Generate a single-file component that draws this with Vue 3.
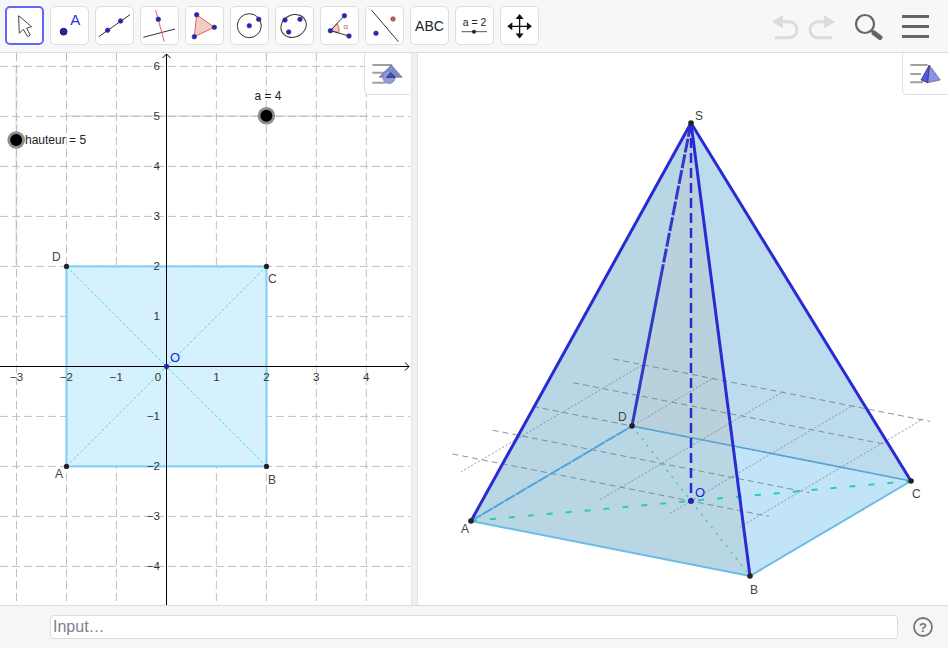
<template>
  <div class="app">
    <header class="toolbar">
      <div class="tools">
        <button class="tool selected">
          <svg viewBox="0 0 39 39"><path d="M13.6 9.7 14.3 27.3 18.3 23.3 22.6 30.7 25.3 29 21.6 22.3 26.6 20.7Z" fill="#fff" stroke="#444" stroke-width="1"/></svg>
        </button>
        <button class="tool">
          <svg viewBox="0 0 39 39">
            <circle cx="13.6" cy="25.7" r="3.4" fill="#2222cc" stroke="#222" stroke-width="1"/>
            <text x="25.3" y="19" class="icon-a">A</text>
          </svg>
        </button>
        <button class="tool">
          <svg viewBox="0 0 39 39">
            <line x1="3.7" y1="30.7" x2="35" y2="8.7" class="ln"/>
            <circle cx="12.6" cy="24.3" r="2.3" class="pt"/>
            <circle cx="25.6" cy="15" r="2.3" class="pt"/>
          </svg>
        </button>
        <button class="tool">
          <svg viewBox="0 0 39 39">
            <line x1="3.3" y1="31.3" x2="35" y2="23" class="ln"/>
            <line x1="15.6" y1="4" x2="24.3" y2="35.7" class="ln-red"/>
            <circle cx="18.3" cy="13.3" r="2.3" class="pt"/>
          </svg>
        </button>
        <button class="tool">
          <svg viewBox="0 0 39 39">
            <path d="M11.7 8.7 29.3 21.3 9.3 30.7Z" fill="#f2cbc5" stroke="#e0675c" stroke-width="1"/>
            <circle cx="11.7" cy="8.7" r="2.3" class="pt"/>
            <circle cx="29.3" cy="21.3" r="2.3" class="pt"/>
            <circle cx="9.3" cy="30.7" r="2.3" class="pt"/>
          </svg>
        </button>
        <button class="tool">
          <svg viewBox="0 0 39 39">
            <circle cx="19.3" cy="19.7" r="12" fill="none" stroke="#333" stroke-width="1"/>
            <circle cx="19.3" cy="19.7" r="2.3" class="pt"/>
            <circle cx="28.7" cy="13.3" r="2.3" class="pt"/>
          </svg>
        </button>
        <button class="tool">
          <svg viewBox="0 0 39 39">
            <ellipse cx="18.6" cy="20" rx="13" ry="11" transform="rotate(-25 18.6 20)" fill="none" stroke="#333" stroke-width="1"/>
            <circle cx="10" cy="14" r="2.3" class="pt"/>
            <circle cx="25" cy="13.3" r="2.3" class="pt"/>
            <circle cx="13.7" cy="26" r="2.3" class="pt"/>
          </svg>
        </button>
        <button class="tool">
          <svg viewBox="0 0 39 39">
            <path d="M10.4 24.7 17 17.5Q20 22 19 26.5Z" fill="#f2cbc5" stroke="#e0675c" stroke-width="1"/>
            <path d="M24.4 9.7 10.4 24.7 29 30" fill="none" stroke="#333" stroke-width="1"/>
            <circle cx="24.4" cy="9.7" r="2.3" class="pt"/>
            <circle cx="10.4" cy="24.7" r="2.3" class="pt"/>
            <circle cx="29" cy="30" r="2.3" class="pt"/>
            <text x="25.7" y="23" class="icon-alpha">α</text>
          </svg>
        </button>
        <button class="tool">
          <svg viewBox="0 0 39 39">
            <line x1="6.4" y1="4" x2="33.4" y2="35.7" class="ln"/>
            <circle cx="28" cy="13" r="2.3" fill="#e0524a" stroke="#555" stroke-width="0.6"/>
            <circle cx="11" cy="27.3" r="2.3" class="pt"/>
          </svg>
        </button>
        <button class="tool">
          <svg viewBox="0 0 39 39"><text x="19.5" y="25" class="icon-abc">ABC</text></svg>
        </button>
        <button class="tool">
          <svg viewBox="0 0 39 39">
            <text x="19.5" y="19.5" class="icon-eq">a = 2</text>
            <line x1="6.6" y1="25.7" x2="32" y2="25.7" stroke="#555" stroke-width="1"/>
            <circle cx="19" cy="25.7" r="2" fill="#223"/>
          </svg>
        </button>
        <button class="tool">
          <svg viewBox="0 0 39 39">
            <path d="M19.6 9v22.6M8.3 20.3h22.6" stroke="#111" stroke-width="1.3" fill="none"/>
            <path d="M19.6 8 15.6 13H23.6ZM19.6 32.6 15.6 27.6H23.6ZM7.3 20.3 12.3 16.3V24.3ZM31.9 20.3 26.9 16.3V24.3Z" fill="#111"/>
          </svg>
        </button>
      </div>
      <div class="actions">
        <svg class="undo" viewBox="0 0 30 30">
          <path d="M1.7 7.7 13 1V14.4Z" fill="#dcdcdc"/>
          <path d="M12 7.7h7a8 8 0 0 1 0 16H5" fill="none" stroke="#dcdcdc" stroke-width="3"/>
        </svg>
        <svg class="redo" viewBox="0 0 30 30">
          <path d="M28.3 7.7 17 1V14.4Z" fill="#dcdcdc"/>
          <path d="M18 7.7h-7a8 8 0 0 0 0 16H25" fill="none" stroke="#dcdcdc" stroke-width="3"/>
        </svg>
        <svg class="search" viewBox="0 0 32 32">
          <circle cx="13" cy="12" r="9" fill="none" stroke="#666" stroke-width="2.2"/>
          <path d="M19.5 18.5 22 20.5" stroke="#666" stroke-width="2"/>
          <path d="M22 21 28 25.5" stroke="#666" stroke-width="5" stroke-linecap="round"/>
        </svg>
        <div class="menu">
          <span></span>
          <span></span>
          <span></span>
        </div>
      </div>
    </header>

    <main class="views">
      <section class="graphics">
        <svg class="canvas" viewBox="0 53 411 552" width="411" height="552">
          <line x1="16.4" y1="66" x2="16.4" y2="266" class="slider-track"/>
          <line x1="66" y1="116" x2="366" y2="116" class="slider-track"/>
          <line v-for="x in gridX" :key="'vx' + x" :x1="x" y1="53" :x2="x" y2="605" class="grid2d"/>
          <line v-for="y in gridY" :key="'hy' + y" x1="0" :y1="y" x2="410" :y2="y" class="grid2d"/>

          <rect x="66.5" y="266.4" width="200" height="200" class="square"/>
          <line x1="66.5" y1="466.4" x2="266.5" y2="266.4" class="diag2d"/>
          <line x1="66.5" y1="266.4" x2="266.5" y2="466.4" class="diag2d"/>

          <line x1="0" y1="366.5" x2="409" y2="366.5" class="axis"/>
          <line x1="166.5" y1="54" x2="166.5" y2="605" class="axis"/>
          <path d="M405 362.5 409 366.5 405 370.5" class="axis-head"/>
          <path d="M162.5 58 166.5 54 170.5 58" class="axis-head"/>

          <text v-for="t in xLabels" :key="'xl' + t.v" :x="t.x" y="381" class="tick tick-x">{{ t.v }}</text>
          <text v-for="t in yLabels" :key="'yl' + t.v" x="160" :y="t.y" class="tick tick-y">{{ t.v }}</text>

          <circle v-for="p in squarePts" :key="p.n" :cx="p.x" :cy="p.y" r="2.6" class="dot"/>
          <circle cx="166.5" cy="366.5" r="2.4" class="dot-blue"/>
          <text x="52" y="261" class="lbl">D</text>
          <text x="268" y="283" class="lbl">C</text>
          <text x="55" y="478" class="lbl">A</text>
          <text x="268" y="484" class="lbl">B</text>
          <text x="170" y="362" class="lbl lbl-blue">O</text>

          <circle cx="266.4" cy="115.7" r="8.8" class="knob-ring"/>
          <circle cx="266.4" cy="115.7" r="6" class="knob"/>
          <text x="254.5" y="100" class="lbl lbl-dark">a = 4</text>
          <circle cx="16.2" cy="140" r="8.8" class="knob-ring"/>
          <circle cx="16.2" cy="140" r="6" class="knob"/>
          <text x="25" y="144" class="lbl lbl-dark">hauteur = 5</text>
        </svg>
        <div class="style-tab">
          <svg viewBox="0 0 45 42" width="45" height="42">
            <path d="M8.3 12H28.3M8.3 19.7H21M8.3 29.7H21" stroke="#a0a0a0" stroke-width="2" fill="none"/>
            <path d="M27.3 12 38.3 24.3H15Z" fill="#7d88d8" stroke="#667" stroke-width="0.6"/>
            <circle cx="25" cy="24.3" r="6.3" fill="#8c9be4" stroke="#778" stroke-width="0.6"/>
            <path d="M26.7 19.5 31 24.3H22.5Z" fill="#4a4ec8" stroke="#223" stroke-width="0.8"/>
          </svg>
        </div>
      </section>

      <div class="divider"></div>

      <section class="graphics3d">
        <svg class="canvas" viewBox="418 53 530 552" width="530" height="552">
          <polygon points="691,123 471,521 750,576 911,481" fill="#bcdcee"/>
          <polygon points="691,123 471,521 750,576" fill="#b9d6e5"/>
          <polygon points="691,123 632,426 733,446" fill="#b9d0dd"/>
          <polygon points="733,446 750,576 911,481" fill="#c1e4f8"/>

          <line v-for="(l, i) in gridLong" :key="'gl' + i" :x1="l.x1" :y1="l.y1" :x2="l.x2" :y2="l.y2" class="grid-long"/>
          <line v-for="(l, i) in gridShort" :key="'gs' + i" :x1="l.x1" :y1="l.y1" :x2="l.x2" :y2="l.y2" class="grid-short"/>

          <line x1="471" y1="521" x2="750" y2="576" class="base-edge"/>
          <line x1="750" y1="576" x2="911" y2="481" class="base-edge"/>
          <line x1="632" y1="426" x2="911" y2="481" class="base-back"/>
          <line x1="471" y1="521" x2="632" y2="426" class="base-back base-dash"/>
          <line x1="471" y1="521" x2="911" y2="481" class="diag-long"/>
          <line x1="632" y1="426" x2="750" y2="576" class="diag-dot"/>

          <line x1="691" y1="123" x2="691" y2="501" class="edge height"/>
          <line x1="691" y1="123" x2="661" y2="276" class="edge edge-hidden"/>
          <line x1="661" y1="276" x2="632" y2="426" class="edge edge-back"/>
          <line x1="691" y1="123" x2="471" y2="521" class="edge"/>
          <line x1="691" y1="123" x2="750" y2="576" class="edge"/>
          <line x1="691" y1="123" x2="911" y2="481" class="edge"/>

          <circle v-for="p in pyramidPts" :key="p.n" :cx="p.x" :cy="p.y" r="2.8" class="dot"/>
          <circle cx="691" cy="501" r="2.8" class="dot-blue"/>
          <text x="695" y="120" class="lbl">S</text>
          <text x="461" y="533" class="lbl">A</text>
          <text x="750" y="594" class="lbl">B</text>
          <text x="912" y="498" class="lbl">C</text>
          <text x="618" y="421" class="lbl">D</text>
          <text x="695" y="497" class="lbl lbl-blue">O</text>
        </svg>
        <div class="style-tab tab-3d">
          <svg viewBox="0 0 46 42" width="46" height="42">
            <path d="M8.3 12H25.6M8.3 21H19M8.3 29.3H21" stroke="#a0a0a0" stroke-width="2" fill="none"/>
            <path d="M27.3 12 38.3 27 25.6 29.7Z" fill="#8791ee" stroke="#556" stroke-width="0.6"/>
            <path d="M27.3 12 19 27 25.6 29.7Z" fill="#5359e6" stroke="#334" stroke-width="0.8"/>
          </svg>
        </div>
      </section>
    </main>

    <footer class="inputbar">
      <input class="input" placeholder="Input…" />
      <svg class="help" viewBox="0 0 22 22" width="22" height="22">
        <circle cx="11" cy="11" r="9" fill="none" stroke="#777" stroke-width="1.8"/>
        <text x="11" y="15.5" class="help-mark">?</text>
      </svg>
    </footer>
  </div>
</template>

<script setup>
const UNIT_X = 49.97
const UNIT_Y = 50
const ORIGIN_X = 166.4
const ORIGIN_Y = 366.4

const xTicks = [-3, -2, -1, 1, 2, 3, 4]
const yTicks = [6, 5, 4, 3, 2, 1, -1, -2, -3, -4]

const gridX = xTicks.map(k => ORIGIN_X + k * UNIT_X)
const gridY = [...yTicks].map(k => ORIGIN_Y - k * UNIT_Y)

const minus = v => (v < 0 ? '\u2212' + -v : String(v))

const xLabels = [
  ...xTicks.map(k => ({ v: minus(k), x: ORIGIN_X + k * UNIT_X })),
  { v: '0', x: 158 }
]
const yLabels = yTicks.map(k => ({ v: minus(k), y: ORIGIN_Y - k * UNIT_Y + 4 }))

const squarePts = [
  { n: 'A', x: 66.5, y: 466.4 },
  { n: 'B', x: 266.5, y: 466.4 },
  { n: 'C', x: 266.5, y: 266.4 },
  { n: 'D', x: 66.5, y: 266.4 }
]

const pyramidPts = [
  { n: 'A', x: 471, y: 521 },
  { n: 'B', x: 750, y: 576 },
  { n: 'C', x: 911, y: 481 },
  { n: 'D', x: 632, y: 426 },
  { n: 'S', x: 691, y: 123 }
]

// base plane of the 3D view, projected from xOy
const project = (u, v) => ({
  x: 691 + u * 69.75 + v * 40.25,
  y: 501 + u * 13.75 - v * 23.75
})
const segment = (a, b) => ({ x1: a.x, y1: a.y, x2: b.x, y2: b.y })

const gridLong = [0, 1, 2, 3, 4].map(v => segment(project(-3.42, v), project(1.12, v)))
const gridShort = [-3, -2, -1, 0, 1].map(u => segment(project(u, -0.52), project(u, 4.03)))
</script>

<style>
html,
body {
  background: #fff;
}
</style>

<style scoped>
.app {
  width: 948px;
  height: 648px;
  display: flex;
  flex-direction: column;
  font-family: "Liberation Sans", Arial, sans-serif;
  overflow: hidden;
}

.toolbar {
  height: 53px;
  box-sizing: border-box;
  background: #f7f7f7;
  border-bottom: 1px solid #dcdcdc;
  display: flex;
  justify-content: space-between;
  padding: 6px 16px 0 5px;
}

.tools {
  display: flex;
  gap: 6px;
}

.tool {
  width: 39px;
  height: 39px;
  padding: 0;
  box-sizing: border-box;
  background: #fff;
  border: 1px solid #dedede;
  border-radius: 5px;
  position: relative;
}

.tool svg {
  position: absolute;
  inset: -1px;
  width: 39px;
  height: 39px;
}

.tool.selected {
  border: 2px solid #6666ff;
}

.tool.selected svg {
  inset: -2px;
}

.ln {
  stroke: #333;
  stroke-width: 1;
}

.ln-red {
  stroke: #e8645a;
  stroke-width: 1;
}

.pt {
  fill: #2222dd;
  stroke: #334;
  stroke-width: 0.6;
}

.icon-a {
  font-size: 15px;
  fill: #2e2ee8;
  text-anchor: middle;
}

.icon-alpha {
  font-size: 8px;
  fill: #e0524a;
  text-anchor: middle;
}

.icon-abc {
  font-size: 14px;
  fill: #222;
  text-anchor: middle;
}

.icon-eq {
  font-size: 10.5px;
  fill: #222;
  text-anchor: middle;
}

.actions {
  display: flex;
  align-items: flex-start;
}

.undo,
.redo {
  width: 30px;
  height: 30px;
  margin-top: 8px;
}

.redo {
  margin-left: 7px;
}

.search {
  width: 32px;
  height: 32px;
  margin: 6px 0 0 15px;
}

.menu {
  width: 27px;
  margin: 9px 3px 0 18px;
  display: flex;
  flex-direction: column;
  gap: 7px;
}

.menu span {
  display: block;
  height: 3px;
  background: #666;
}

.views {
  flex: 1;
  display: flex;
  min-height: 0;
}

.graphics {
  width: 411px;
  position: relative;
  overflow: hidden;
}

.graphics3d {
  flex: 1;
  position: relative;
  overflow: hidden;
}

.canvas {
  display: block;
}

.divider {
  width: 7px;
  box-sizing: border-box;
  background: #f0f0f0;
  border-left: 1px solid #e4e4e4;
  border-right: 1px solid #e4e4e4;
}

.style-tab {
  position: absolute;
  top: 0;
  right: 1px;
  width: 46px;
  height: 42px;
  box-sizing: border-box;
  background: #fff;
  border-left: 1px solid #e0e0e0;
  border-bottom: 1px solid #e0e0e0;
  border-bottom-left-radius: 5px;
}

.style-tab svg {
  display: block;
  margin-left: -1px;
}

.tab-3d {
  right: 0;
}

.slider-track {
  stroke: #e4e4e4;
  stroke-width: 2;
}

.grid2d {
  stroke: #c0c0c0;
  stroke-width: 1;
  stroke-dasharray: 8 4;
}

.square {
  fill: #d6f1fe;
  stroke: #7fcdf5;
  stroke-width: 2;
}

.diag2d {
  stroke: #45e3dc;
  stroke-width: 1;
  stroke-dasharray: 3 2;
}

.axis {
  stroke: #000;
  stroke-width: 1;
}

.axis-head {
  fill: none;
  stroke: #000;
  stroke-width: 1;
}

.tick {
  font-size: 11.5px;
  fill: #333;
}

.tick-x {
  text-anchor: middle;
}

.tick-y {
  text-anchor: end;
}

.dot {
  fill: #222;
}

.dot-blue {
  fill: #2222cc;
  stroke: #223;
  stroke-width: 0.5;
}

.lbl {
  font-size: 12px;
  fill: #444;
}

.lbl-dark {
  fill: #222;
}

.lbl-blue {
  fill: #2222dd;
  font-size: 13px;
}

.knob {
  fill: #000;
}

.knob-ring {
  fill: #8a8f94;
}

.grid-long {
  stroke: #6f7d84;
  stroke-width: 1;
  stroke-dasharray: 6 4;
  opacity: 0.8;
}

.grid-short {
  stroke: #7c8a90;
  stroke-width: 1;
  stroke-dasharray: 2 2;
  opacity: 0.85;
}

.base-edge {
  stroke: #6cbce6;
  stroke-width: 2;
}

.base-back {
  stroke: #55a5d2;
  stroke-width: 1.6;
}

.base-dash {
  stroke: #4ba6dc;
  stroke-width: 2;
  stroke-dasharray: 12 1;
}

.diag-long {
  stroke: #2ccbb4;
  stroke-width: 2;
  stroke-dasharray: 6 13;
}

.diag-dot {
  stroke: #2ccbb4;
  stroke-width: 1.4;
  stroke-dasharray: 2 6;
}

.edge {
  stroke: #2a2ad4;
  stroke-width: 3;
}

.edge-back {
  stroke: #3438c8;
  stroke-width: 3;
}

.edge-hidden {
  stroke: #3438c8;
  stroke-width: 3;
  stroke-dasharray: 14 2;
}

.height {
  stroke-width: 2.5;
  stroke-dasharray: 10 5;
}

.inputbar {
  height: 43px;
  box-sizing: border-box;
  background: #f6f6f6;
  border-top: 1px solid #dcdcdc;
  display: flex;
  align-items: center;
  padding: 0 14px 0 50px;
  gap: 14px;
}

.input {
  flex: 1;
  height: 24px;
  box-sizing: border-box;
  border: 1px solid #dcdcdc;
  border-radius: 4px;
  background: #fff;
  padding: 0 2px;
  font-family: "Liberation Sans", Arial, sans-serif;
  font-size: 16px;
  outline: none;
}

.input::placeholder {
  color: #7a8288;
  opacity: 1;
}

.help-mark {
  font-size: 13px;
  font-weight: 700;
  fill: #777;
  text-anchor: middle;
}
</style>
